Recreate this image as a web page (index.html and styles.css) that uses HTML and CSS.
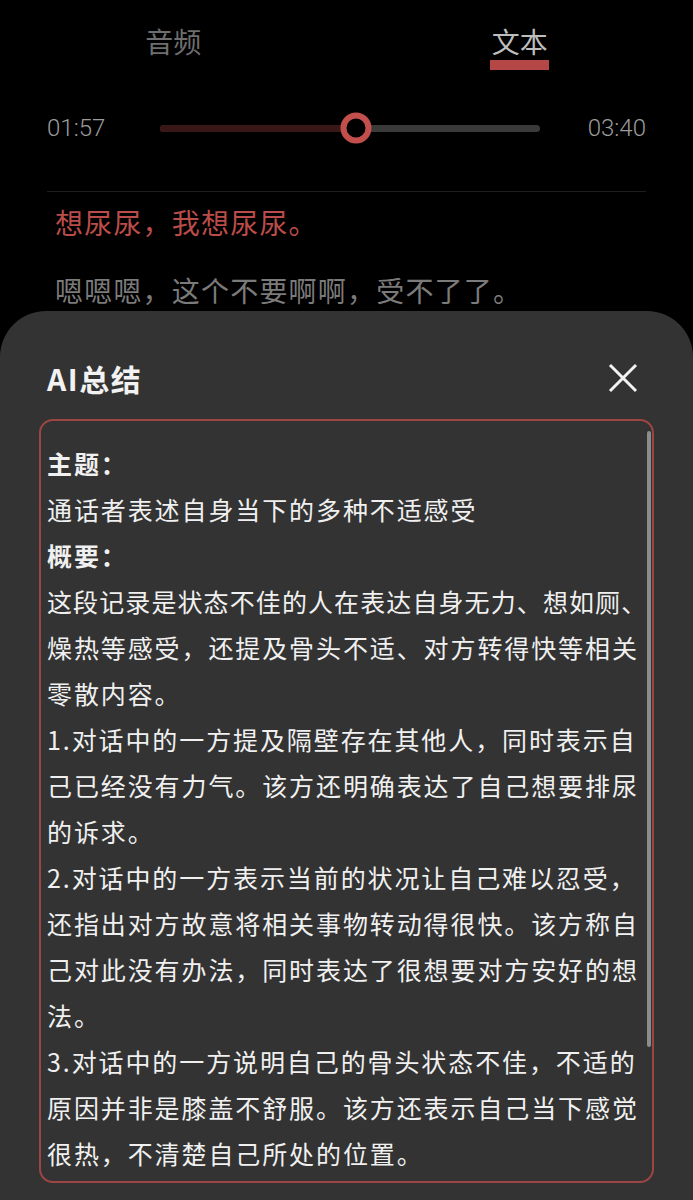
FILE: index.html
```html
<!DOCTYPE html>
<html lang="zh-CN">
<head>
<meta charset="utf-8">
<title>AI总结</title>
<link rel="stylesheet" href="styles.css">
</head>
<body>
<div class="page">
  <div class="tabs">
    <div class="tab"><span class="tab-label">音频</span></div>
    <div class="tab active"><span class="tab-label">文本</span></div>
  </div>

  <div class="player">
    <span class="time time-left">01:57</span>
    <div class="track">
      <div class="track-fill" style="width: 51.6%"></div>
      <div class="thumb" style="left: 51.6%"></div>
    </div>
    <span class="time time-right">03:40</span>
  </div>

  <div class="divider"></div>

  <div class="transcript">
    <p class="line current">想尿尿，我想尿尿。</p>
    <p class="line">嗯嗯嗯，这个不要啊啊，受不了了。</p>
  </div>

  <div class="sheet">
    <div class="sheet-header">
      <h2 class="sheet-title">AI总结</h2>
      <svg class="close" width="30" height="30" viewBox="0 0 30 30" aria-label="关闭">
        <path d="M2 2 L28 28 M28 2 L2 28" stroke="#f2f2f2" stroke-width="3" stroke-linecap="butt" fill="none"/>
      </svg>
    </div>
    <div class="summary">
      <div class="summary-text">
        <p class="label">主题：</p>
        <p>通话者表述自身当下的多种不适感受</p>
        <p class="label">概要：</p>
        <p><span class="fit">这段记录是状态不佳的人在表达自身无力、想如厕、</span><br>燥热等感受，还提及骨头不适、对方转得快等相关<br>零散内容。</p>
        <p>1.对话中的一方提及隔壁存在其他人，同时表示自<br>己已经没有力气。该方还明确表达了自己想要排尿<br>的诉求。</p>
        <p>2.对话中的一方表示当前的状况让自己难以忍受，<br>还指出对方故意将相关事物转动得很快。该方称自<br>己对此没有办法，同时表达了很想要对方安好的想<br>法。</p>
        <p>3.对话中的一方说明自己的骨头状态不佳，不适的<br>原因并非是膝盖不舒服。该方还表示自己当下感觉<br>很热，不清楚自己所处的位置。</p>
      </div>
      <div class="scrollbar"></div>
    </div>
  </div>
</div>
</body>
</html>
```

FILE: styles.css
```css
* {
  box-sizing: border-box;
}

html, body {
  margin: 0;
  padding: 0;
  background: #000;
}

body {
  font-family: "Noto Sans CJK SC", "Noto Sans", sans-serif;
  color: #f0f0f0;
}

.page {
  width: 693px;
  height: 1200px;
  overflow: hidden;
  display: flex;
  flex-direction: column;
}

/* Tabs */
.tabs {
  display: grid;
  grid-template-columns: 1fr 1fr;
  padding-top: 25px;
}

.tab {
  display: flex;
  justify-content: center;
}

.tab-label {
  display: flex;
  flex-direction: column;
  align-items: center;
  font-size: 28px;
  line-height: 32px;
  color: #6e6e6e;
}

.tab.active .tab-label {
  color: #bdbdbd;
}

.tab.active .tab-label::after {
  content: "";
  display: block;
  width: 59px;
  height: 10px;
  margin-top: 3px;
  background: #b54846;
}

/* Player */
.player {
  display: flex;
  align-items: center;
  height: 30px;
  margin-top: 43px;
  padding: 0 47px;
}

.time {
  font-family: Roboto, "Liberation Sans", sans-serif;
  font-weight: 300;
  font-size: 24px;
  color: #9c9c9c;
  line-height: 30px;
}

.time-left {
  width: 113px;
}

.time-right {
  width: 106px;
  text-align: right;
}

.track {
  position: relative;
  flex: 1;
  height: 7px;
  border-radius: 4px;
  background: #3a3a3a;
}

.track-fill {
  height: 100%;
  border-radius: 4px 0 0 4px;
  background: #3a1717;
}

.thumb {
  position: absolute;
  top: 50%;
  width: 31px;
  height: 31px;
  border-radius: 50%;
  border: 6px solid #c24f4c;
  background: #000;
  transform: translate(-50%, -50%);
}

.divider {
  height: 1px;
  margin: 48px 47px 0;
  background: #1d1d1d;
}

/* Transcript */
.transcript {
  padding: 0 55px;
}

.line {
  margin: 0;
  font-size: 28px;
  line-height: 40px;
  letter-spacing: 1.2px;
  color: #7b7b7b;
  white-space: nowrap;
}

.line.current {
  margin-top: 10px;
  margin-bottom: 28px;
  color: #ba4c49;
}

/* Bottom sheet */
.sheet {
  flex: 1;
  background: #333333;
  border-radius: 46px 46px 0 0;
  margin-top: 1px;
  padding: 47px 39px 0;
}

.sheet-header {
  display: flex;
  align-items: center;
  justify-content: space-between;
  height: 40px;
  padding: 0 16px 0 8px;
}

.sheet-title {
  margin: 0;
  font-size: 30px;
  font-weight: 700;
  line-height: 40px;
  letter-spacing: 1.5px;
  color: #f2f2f2;
}

.close {
  display: block;
  width: 30px;
  height: 30px;
}

.summary {
  position: relative;
  margin-top: 21px;
  height: 764px;
  border: 2px solid #9c4543;
  border-radius: 14px;
  overflow: hidden;
  padding: 19px 6px 0;
}

.summary-text p {
  margin: 0;
  font-size: 25px;
  line-height: 46px;
  letter-spacing: 1.9px;
  color: #f0f0f0;
  white-space: nowrap;
}

.summary-text p.label {
  font-weight: 700;
}

.summary-text .fit {
  letter-spacing: 1.1px;
}

.scrollbar {
  position: absolute;
  top: 10px;
  right: 1px;
  width: 4px;
  height: 616px;
  border-radius: 2px;
  background: #8c8c8c;
}
```
